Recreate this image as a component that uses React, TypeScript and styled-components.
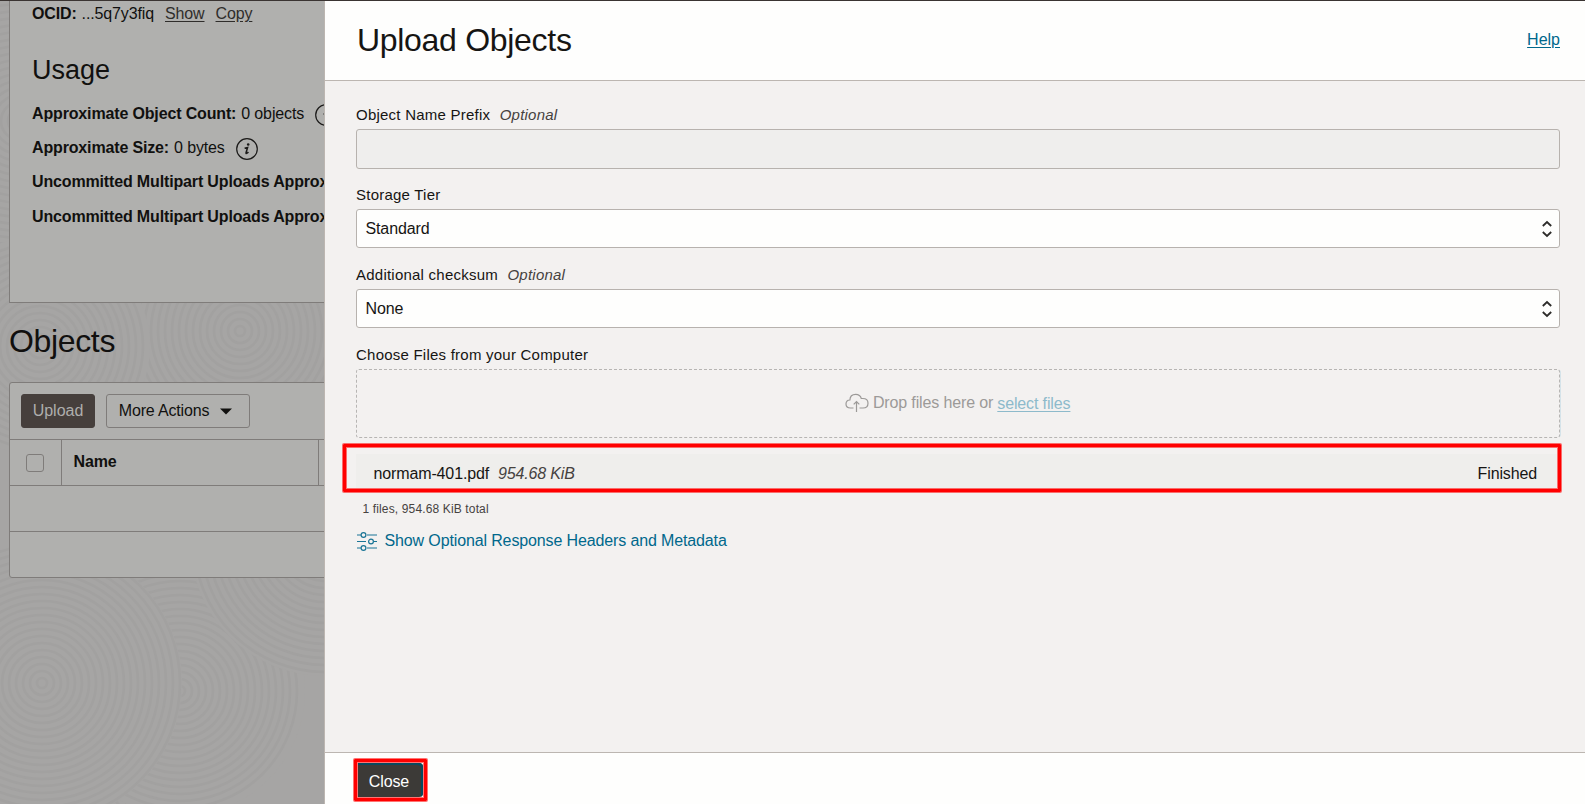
import React from 'react';
import styled, { createGlobalStyle, css } from 'styled-components';

const GlobalStyle = createGlobalStyle`
  *, *::before, *::after { box-sizing: border-box; }
  html, body { margin: 0; height: 100%; overflow: hidden; }
  body {
    font-family: 'Liberation Sans', Arial, sans-serif;
    font-size: 16px;
    line-height: 20px;
    letter-spacing: -0.13px;
    color: #161513;
  }
`;

const Screen = styled.div`
  display: flex;
  width: 1585px;
  height: 804px;
  border-top: 1px solid #3a3432;
  overflow: hidden;
`;

const Backdrop = styled.main`
  position: relative;
  isolation: isolate;
  width: 324px;
  flex: none;
  padding-left: 9px;
  background: #a6a5a4;
  color: #11100f;
  overflow: hidden;
  white-space: nowrap;
`;

const Pattern = styled.svg`
  position: absolute;
  inset: 0;
  z-index: -1;
`;

const DetailsCard = styled.section`
  width: 700px;
  height: 302px;
  padding: 3px 0 0 22px;
  border: 1px solid #7f7c7a;
  border-top: 0;
  background: #b0b0ae;
`;

const Detail = styled.div<{ $gap?: number }>`
  display: flex;
  height: 20px;
  margin-top: ${p => p.$gap ?? 0}px;
`;

const Term = styled.b`
  margin-right: 5px;
  letter-spacing: -0.15px;
`;

const QuietLink = styled.a`
  margin-left: 11px;
  color: #2f2d2b;
  text-decoration: underline;
  text-underline-offset: 2px;
`;

const UsageTitle = styled.h3`
  margin: 30px 0 0;
  font-size: 27px;
  line-height: 32px;
  font-weight: 400;
  letter-spacing: 0;
`;

const InfoIcon = styled.svg`
  flex: none;
  margin: 0 0 0 11px;
`;

const ObjectsTitle = styled.h2`
  margin: 20px 0 0;
  font-size: 32px;
  line-height: 36px;
  font-weight: 400;
  letter-spacing: -0.35px;
`;

const TableCard = styled.section`
  width: 700px;
  margin-top: 23px;
  border: 1px solid #7f7c7a;
  border-radius: 3px;
  background: #b0b0ae;
`;

const Toolbar = styled.div`
  display: flex;
  align-items: center;
  gap: 11px;
  height: 56px;
  padding-left: 11px;
`;

const ToolButton = styled.button<{ $primary?: boolean }>`
  display: flex;
  align-items: center;
  justify-content: center;
  gap: 11px;
  width: ${p => (p.$primary ? 74 : 144)}px;
  height: 34px;
  padding: 0 5px 0 0;
  border: 1px solid #7f7c7a;
  border-radius: 3px;
  background: transparent;
  color: #11100f;
  font: inherit;
  letter-spacing: -0.17px;
  ${p => p.$primary && css`
    padding: 0;
    border-color: #463f3c;
    background: #463f3c;
    color: #aeaeac;
    letter-spacing: 0;
  `}
`;

const TableRow = styled.div`
  display: flex;
  height: 46px;
  border-top: 1px solid #7f7c7a;
`;

const HeadCell = styled.div<{ $width: number }>`
  display: flex;
  align-items: center;
  width: ${p => p.$width}px;
  padding: 0 0 2px 11.5px;
  border-right: 1px solid #7f7c7a;
  font-weight: 700;
`;

const Checkbox = styled.span`
  width: 18px;
  height: 18px;
  margin: 3px 0 0 4.5px;
  border: 1px solid #7f7c7a;
  border-radius: 3px;
`;

const Drawer = styled.aside`
  display: flex;
  flex-direction: column;
  flex: 1;
  border-left: 1px solid #bcb6b1;
  background: #f3f1f0;
`;

const DrawerHeader = styled.header`
  display: flex;
  align-items: center;
  justify-content: space-between;
  height: 80px;
  padding: 0 25px 2px 32px;
  border-bottom: 1px solid #bcb6b1;
  background: #fefefd;
`;

const DrawerTitle = styled.h1`
  margin: 0;
  font-size: 32px;
  line-height: 36px;
  font-weight: 400;
  letter-spacing: -0.3px;
`;

const Link = styled.a`
  color: #00688c;
  text-decoration: underline;
  text-underline-offset: 2px;
`;

const HelpLink = styled(Link)`
  letter-spacing: 0;
`;

const DrawerBody = styled.div`
  flex: 1;
  padding: 24px 25px 0 31px;
`;

const Field = styled.div`
  height: 80px;
`;

const Label = styled.label`
  display: block;
  height: 24px;
  font-size: 15px;
  line-height: 20px;
  letter-spacing: 0.23px;
`;

const Optional = styled.i`
  margin-left: 9.5px;
  color: #46423f;
`;

const TextInput = styled.input`
  display: block;
  width: 100%;
  height: 40px;
  border: 1px solid #b7b2ae;
  border-radius: 3px;
  background: #efeeed;
`;

const SelectBox = styled.div`
  display: flex;
  align-items: center;
  justify-content: space-between;
  height: 39px;
  padding: 1px 7.5px 0 8.5px;
  border: 1px solid #b7b2ae;
  border-radius: 3px;
  background: #fefefd;
`;

const DropZone = styled.div`
  display: flex;
  align-items: center;
  justify-content: center;
  height: 69px;
  padding: 0 1px 1px 0;
  border: 1px dashed #b7b5b3;
  border-radius: 3px;
  box-shadow: 2px 0 0 -1px #d5e3e9;
  background: #f3f1f0;
  color: #9c9a98;
`;

const SelectFiles = styled(Link)`
  margin: 2px 0 0 4px;
  color: #8dbacb;
`;

const Highlight = styled.div`
  border: 3px solid #ff0000;
  border-radius: 1px;
  box-shadow: 0 0 0 1px #ff00008c, inset 0 0 0 1px #ff00008c;
`;

const FileHighlight = styled(Highlight)`
  height: 48px;
  margin: 6px -1px 0 -13px;
  padding: 7px 1px 1px 10px;
`;

const FileRow = styled.div`
  display: flex;
  height: 34px;
  padding: 10px 20px 0 17.5px;
  background: #efeeec;
`;

const FileSize = styled.i`
  margin-left: 9px;
  color: #46423f;
  letter-spacing: -0.16px;
`;

const FileStatus = styled.span`
  margin-left: auto;
`;

const Summary = styled.p`
  margin: 7px 0 0 6.5px;
  font-size: 12px;
  line-height: 20px;
  letter-spacing: 0.14px;
  color: #46423f;
`;

const MetadataToggle = styled.a`
  display: flex;
  gap: 7px;
  margin: 12px 0 0 0.5px;
  color: #00688c;
`;

const DrawerFooter = styled.footer`
  height: 52px;
  padding: 6px 0 0 29px;
  border-top: 1px solid #bcb6b1;
  background: #fefefd;
`;

const CloseHighlight = styled(Highlight)`
  width: 73px;
  height: 42px;
  padding: 1px;
`;

const CloseButton = styled.button`
  display: block;
  width: 65px;
  height: 34px;
  padding: 4px 3px 0 0;
  border: 0;
  border-radius: 0 4px 4px 0;
  box-shadow: inset -2px 2px 0 #07495f;
  background: #3c3a37;
  color: #fff;
  font: inherit;
  letter-spacing: -0.13px;
`;

const swirls = [
  [20, 120, 150], [240, 330, 190], [40, 345, 110], [185, 590, 110],
  [40, 870, 130], [180, 690, 125], [42, 682, 140], [325, 540, 135],
];

function Swirls() {
  return (
    <Pattern width="324" height="803" aria-hidden="true">
      {swirls.map(([cx, cy, size]) => (
        <g key={`${cx}-${cy}`} fill="none" stroke="#a2a1a0" strokeWidth="2.6">
          <circle cx={cx} cy={cy} r={size} fill="#a6a5a4" stroke="none" />
          {Array.from({ length: Math.floor(size / 7) }, (_, i) => (
            <circle key={i} cx={cx} cy={cy} r={5 + i * 7} />
          ))}
        </g>
      ))}
    </Pattern>
  );
}

function Info() {
  return (
    <InfoIcon width="22" height="22" viewBox="0 0 22 22">
      <circle cx="11" cy="11" r="10.3" fill="none" stroke="#1b1a19" strokeWidth="1.2" />
      <circle cx="12.2" cy="6.5" r="1.3" fill="#1b1a19" />
      <path d="M8.600 10.200l3-.7-1.500 5q-.3 1.200.5.900 .9-.3 1.800-1.400" fill="none" stroke="#1b1a19" strokeWidth="1.5" />
    </InfoIcon>
  );
}

function Sorter() {
  return (
    <svg width="10" height="18" viewBox="0 0 10 18" fill="none" stroke="#2d2b29" strokeWidth="1.8">
      <path d="M.8 6L5 2l4.200 4M.8 12L5 16l4.200-4" />
    </svg>
  );
}

function CloudUpload() {
  return (
    <svg width="24" height="20" viewBox="0 0 24 20" fill="none" stroke="#9c9a98" strokeWidth="1.2">
      <path d="M8.500 15H5.500C2.800 15 1 13.300 1 11c0-2.300 1.600-3.900 3.900-4C5 3.500 7.400 1.300 10.700 1.300c2.900 0 4.900 1.600 5.600 4.200h1.500c3.200 0 5.200 2 5.200 4.700 0 2.900-2 4.800-5 4.800h-3.500" />
      <path d="M11.500 19V8.500M8.700 11.300l2.800-2.800 2.800 2.800" />
    </svg>
  );
}

function Sliders() {
  return (
    <svg width="21" height="21" viewBox="0 0 21 21" fill="none" stroke="#1a7596" strokeWidth="1.2">
      <path d="M0 4h4M10 4h10M0 10.500h9M17 10.500h3M0 17h4M10 17h10" />
      <circle cx="6.500" cy="4" r="2.400" />
      <circle cx="14" cy="10.500" r="2.400" />
      <circle cx="6.500" cy="17" r="2.400" />
    </svg>
  );
}

export default function App() {
  return (
    <Screen>
      <GlobalStyle />
      <Backdrop>
        <Swirls />
        <DetailsCard>
          <Detail>
            <Term>OCID:</Term>
            <span>...5q7y3fiq</span>
            <QuietLink>Show</QuietLink>
            <QuietLink>Copy</QuietLink>
          </Detail>
          <UsageTitle>Usage</UsageTitle>
          <Detail $gap={18}><Term>Approximate Object Count:</Term>0 objects<Info /></Detail>
          <Detail $gap={14}><Term>Approximate Size:</Term>0 bytes<Info /></Detail>
          <Detail $gap={14}><Term>Uncommitted Multipart Uploads Approx</Term></Detail>
          <Detail $gap={15}><Term>Uncommitted Multipart Uploads Approx</Term></Detail>
        </DetailsCard>
        <ObjectsTitle>Objects</ObjectsTitle>
        <TableCard>
          <Toolbar>
            <ToolButton $primary>Upload</ToolButton>
            <ToolButton>
              More Actions
              <svg width="12" height="7" viewBox="0 0 12 7"><path d="M0 .5h12L6 6.500z" fill="#11100f" /></svg>
            </ToolButton>
          </Toolbar>
          <TableRow>
            <HeadCell $width={52}><Checkbox /></HeadCell>
            <HeadCell $width={257}>Name</HeadCell>
          </TableRow>
          <TableRow />
          <TableRow />
        </TableCard>
      </Backdrop>
      <Drawer>
        <DrawerHeader>
          <DrawerTitle>Upload Objects</DrawerTitle>
          <HelpLink>Help</HelpLink>
        </DrawerHeader>
        <DrawerBody>
          <Field>
            <Label>Object Name Prefix<Optional>Optional</Optional></Label>
            <TextInput />
          </Field>
          <Field>
            <Label>Storage Tier</Label>
            <SelectBox>Standard<Sorter /></SelectBox>
          </Field>
          <Field>
            <Label>Additional checksum<Optional>Optional</Optional></Label>
            <SelectBox>None<Sorter /></SelectBox>
          </Field>
          <Label>Choose Files from your Computer</Label>
          <DropZone>
            <CloudUpload />&nbsp;Drop files here or<SelectFiles>select files</SelectFiles>
          </DropZone>
          <FileHighlight>
            <FileRow>
              normam-401.pdf<FileSize>954.68 KiB</FileSize>
              <FileStatus>Finished</FileStatus>
            </FileRow>
          </FileHighlight>
          <Summary>1 files, 954.68 KiB total</Summary>
          <MetadataToggle><Sliders />Show Optional Response Headers and Metadata</MetadataToggle>
        </DrawerBody>
        <DrawerFooter>
          <CloseHighlight>
            <CloseButton>Close</CloseButton>
          </CloseHighlight>
        </DrawerFooter>
      </Drawer>
    </Screen>
  );
}
